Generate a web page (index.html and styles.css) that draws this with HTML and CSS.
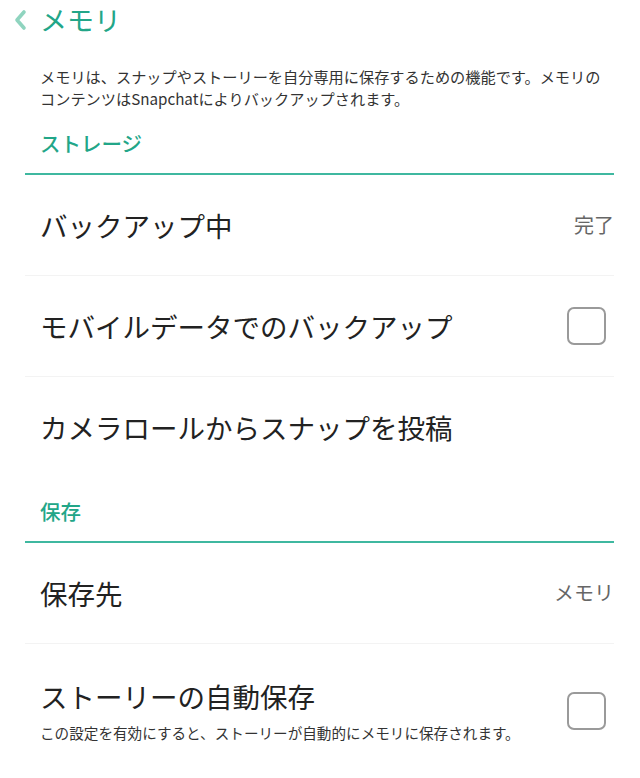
FILE: index.html
```html
<!DOCTYPE html>
<html lang="ja">
<head>
<meta charset="utf-8">
<link rel="stylesheet" href="styles.css">
</head>
<body>
<div class="page">
  <header class="topbar">
    <svg class="back" width="16" height="24" viewBox="0 0 16 24"><path d="M12 4 L5 12 L12 20" fill="none" stroke="#8fd4bf" stroke-width="3.6" stroke-linecap="round" stroke-linejoin="round"/></svg>
    <h1 class="title">メモリ</h1>
  </header>
  <p class="desc">メモリは、スナップやストーリーを自分専用に保存するための機能です。メモリのコンテンツはSnapchatによりバックアップされます。</p>

  <section class="group">
    <h2 class="group-head">ストレージ</h2>
    <div class="row">
      <span class="label">バックアップ中</span>
      <span class="value">完了</span>
    </div>
    <div class="row">
      <span class="label">モバイルデータでのバックアップ</span>
      <span class="check"></span>
    </div>
    <div class="row last">
      <span class="label">カメラロールからスナップを投稿</span>
    </div>
  </section>

  <section class="group">
    <h2 class="group-head">保存</h2>
    <div class="row">
      <span class="label">保存先</span>
      <span class="value">メモリ</span>
    </div>
    <div class="row last tall">
      <div class="textblock">
        <span class="label">ストーリーの自動保存</span>
        <span class="sub">この設定を有効にすると、ストーリーが自動的にメモリに保存されます。</span>
      </div>
      <span class="check"></span>
    </div>
  </section>
</div>
</body>
</html>
```

FILE: styles.css
```css
* { box-sizing: border-box; }
html, body { margin: 0; padding: 0; background: #ffffff; }
body {
  font-family: "Noto Sans CJK JP", "Noto Sans", sans-serif;
  color: #222222;
  width: 640px;
  height: 778px;
  overflow: hidden;
}
.page { padding: 0 26px 0 25px; }
.topbar {
  display: flex;
  align-items: center;
  height: 40px;
  margin-left: -13px;
}
.back { display: block; margin-right: 12px; }
.title {
  margin: 0;
  font-size: 27px;
  line-height: 40px;
  font-weight: 400;
  color: #22a688;
}
.desc {
  margin: 25px 0 0 15px;
  font-size: 15.2px;
  line-height: 22px;
  color: #333333;
  width: 575px;
}
.group-head {
  margin: 20px 0 0;
  padding: 0 0 16px 15px;
  font-size: 20.5px;
  line-height: 28px;
  font-weight: 500;
  color: #22a688;
  border-bottom: 2px solid #3fb8a0;
}
.row {
  display: flex;
  align-items: center;
  justify-content: space-between;
  padding: 31px 0 31px 15px;
  border-bottom: 1px solid #f3f3f3;
}
.row.last { border-bottom: none; }
.label {
  font-size: 27.5px;
  line-height: 38px;
  color: #222222;
}
.value {
  font-size: 20px;
  line-height: 28px;
  color: #666666;
}
.check {
  width: 39px;
  height: 38px;
  border: 2px solid #9a9a9a;
  border-radius: 7px;
  margin-right: 8px;
  flex: none;
}
.row.tall { padding-top: 33px; padding-bottom: 24px; }
.textblock { display: flex; flex-direction: column; }
.sub {
  margin-top: 7px;
  font-size: 14.6px;
  line-height: 22px;
  color: #333333;
}
```
